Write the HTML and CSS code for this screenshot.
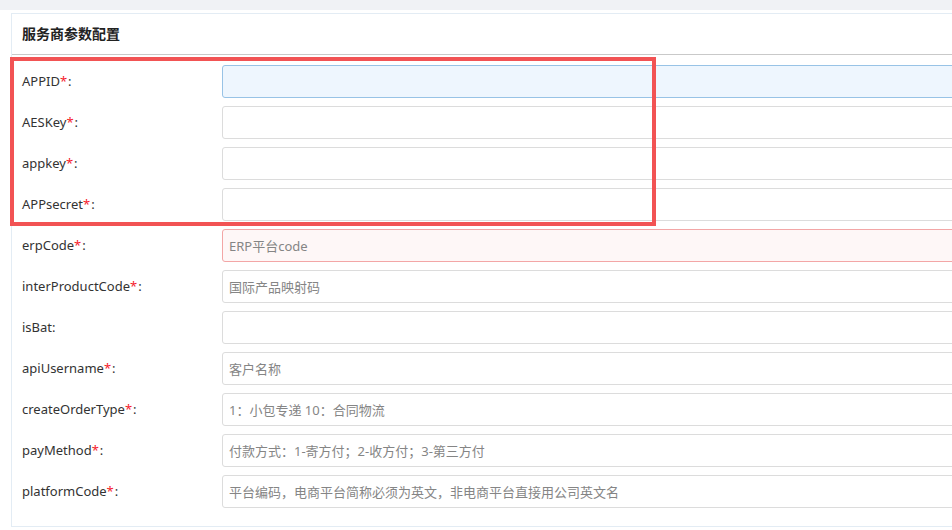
FILE: index.html
```html
<!DOCTYPE html>
<html lang="zh-CN">
<head>
  <meta charset="UTF-8" />
  <title>服务商参数配置</title>
  <link rel="stylesheet" href="styles.css">
</head>
<body>
  <div class="page">
    <div class="panel">
      <div class="panel-title">服务商参数配置</div>
      <div class="form">
        <div class="mark"></div>
        <div class="row">
          <label>APPID<em>*</em>:</label>
          <input class="focus" type="text">
        </div>
        <div class="row">
          <label>AESKey<em>*</em>:</label>
          <input type="text">
        </div>
        <div class="row">
          <label>appkey<em>*</em>:</label>
          <input type="text">
        </div>
        <div class="row">
          <label>APPsecret<em>*</em>:</label>
          <input type="text">
        </div>
        <div class="row">
          <label>erpCode<em>*</em>:</label>
          <input class="error" type="text" placeholder="ERP平台code">
        </div>
        <div class="row">
          <label>interProductCode<em>*</em>:</label>
          <input type="text" placeholder="国际产品映射码">
        </div>
        <div class="row">
          <label>isBat:</label>
          <input type="text">
        </div>
        <div class="row">
          <label>apiUsername<em>*</em>:</label>
          <input type="text" placeholder="客户名称">
        </div>
        <div class="row">
          <label>createOrderType<em>*</em>:</label>
          <input type="text" placeholder="1：小包专递 10：合同物流">
        </div>
        <div class="row">
          <label>payMethod<em>*</em>:</label>
          <input type="text" placeholder="付款方式：1-寄方付；2-收方付；3-第三方付">
        </div>
        <div class="row">
          <label>platformCode<em>*</em>:</label>
          <input type="text" placeholder="平台编码，电商平台简称必须为英文，非电商平台直接用公司英文名">
        </div>
      </div>
    </div>
  </div>
</body>
</html>
```

FILE: styles.css
```css
html, body {
  margin: 0;
  height: 100%;
  overflow: hidden;
}

body {
  font-family: "Noto Sans", "Noto Sans CJK SC", sans-serif;
  font-size: 13px;
  color: #333;
  background: #f0f2f5;
  padding-top: 10px;
  box-sizing: border-box;
}

.page {
  background: #fff;
  padding: 3px 0 0 11px;
  height: 100%;
  box-sizing: border-box;
}

.panel {
  border: 1px solid #e3ecf4;
  background: #fff;
  margin-right: -300px;
}

.panel-title {
  height: 40px;
  line-height: 40px;
  padding-left: 10px;
  font-size: 14px;
  font-weight: bold;
  color: #222;
  border-bottom: 1px solid #c9c9c9;
}

.form {
  position: relative;
  padding: 10px 0 10px;
}

.row {
  display: flex;
  align-items: center;
  margin-bottom: 8px;
}

.row label {
  width: 210px;
  flex: none;
  padding-left: 10px;
  padding-bottom: 1px;
  box-sizing: border-box;
  color: #333;
}

.row label em {
  font-style: normal;
  color: #f5222d;
  margin-right: 1px;
}

.row input {
  flex: 1;
  height: 33px;
  box-sizing: border-box;
  border: 1px solid #dcdcdc;
  border-radius: 3px;
  padding: 0 6px;
  font-family: inherit;
  font-size: 13px;
  color: #333;
  outline: none;
}

.row input::placeholder {
  color: #858585;
}

.row input.focus {
  background: #eef6fe;
  border-color: #98c3e6;
}

.row input.error {
  background: #fef7f7;
  border-color: #f3a6a6;
}

/* annotation box drawn over the first four fields */
.mark {
  position: absolute;
  left: -2px;
  top: 2px;
  width: 646px;
  height: 169px;
  box-sizing: border-box;
  border: 4px solid #f25354;
  pointer-events: none;
}
```
